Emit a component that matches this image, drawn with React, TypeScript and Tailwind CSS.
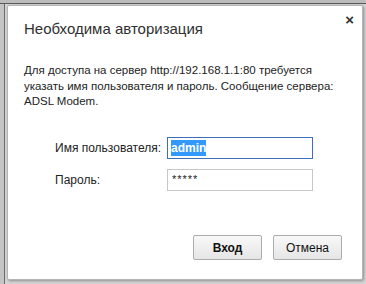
export default function App() {
  return (
    <div className="w-[366px] h-[284px] bg-[#d6d6d6] overflow-hidden font-['Liberation_Sans',Arial,sans-serif] text-[#222]">
      <div className="h-[3px] bg-[#bcbcbc]" />
      <div className="h-[1px] bg-[#5a5a5a]" />
      <div className="flex h-[280px]">
        <div className="w-[4px] bg-[#c4c4c4]" />
        <div className="w-[1px] bg-[#6a6a6a]" />
        <div className="ml-[2px] mt-[1px] w-[356px] h-[275px] bg-white border border-[#b5b5b5] rounded-[2px] shadow-[1px_1px_3px_rgba(0,0,0,0.35)] flex flex-col">
          <div className="flex items-start justify-between pl-[16px] pr-[8px] pt-[13px]">
            <span className="text-[15px] leading-[20px] text-[#303030]">Необходима авторизация</span>
            <span className="-mt-[10px] text-[15px] font-bold text-[#333]">×</span>
          </div>
          <p className="mt-[24px] pl-[16px] pr-[24px] text-[11.5px] leading-[15.5px] text-[#222]">
            Для доступа на сервер http://192.168.1.1:80 требуется указать имя пользователя и пароль. Сообщение сервера: ADSL Modem.
          </p>
          <div className="mt-[27px] grid grid-cols-[112px_146px] gap-y-[10px] items-center pl-[47px] text-[12px]">
            <span className="whitespace-nowrap">Имя пользователя:</span>
            <div className="h-[22px] border border-[#3c6fb5] bg-white flex items-center px-[3px]">
              <span className="bg-[#3399ff] text-white font-semibold leading-[16px]">admin</span>
            </div>
            <span>Пароль:</span>
            <div className="h-[22px] border border-[#c8c8c8] bg-white flex items-center px-[4px] text-[11px] tracking-[1px]">
              *****
            </div>
          </div>
          <div className="mt-auto mb-[19px] flex justify-end gap-[11px] pr-[20px]">
            <button className="w-[69px] h-[25px] rounded-[2px] border border-[#acacac] bg-gradient-to-b from-[#f8f8f8] to-[#e6e6e6] text-[12px] font-bold text-[#111]">
              Вход
            </button>
            <button className="w-[69px] h-[25px] rounded-[2px] border border-[#acacac] bg-gradient-to-b from-[#f8f8f8] to-[#e6e6e6] text-[12px] text-[#111]">
              Отмена
            </button>
          </div>
        </div>
      </div>
    </div>
  );
}
